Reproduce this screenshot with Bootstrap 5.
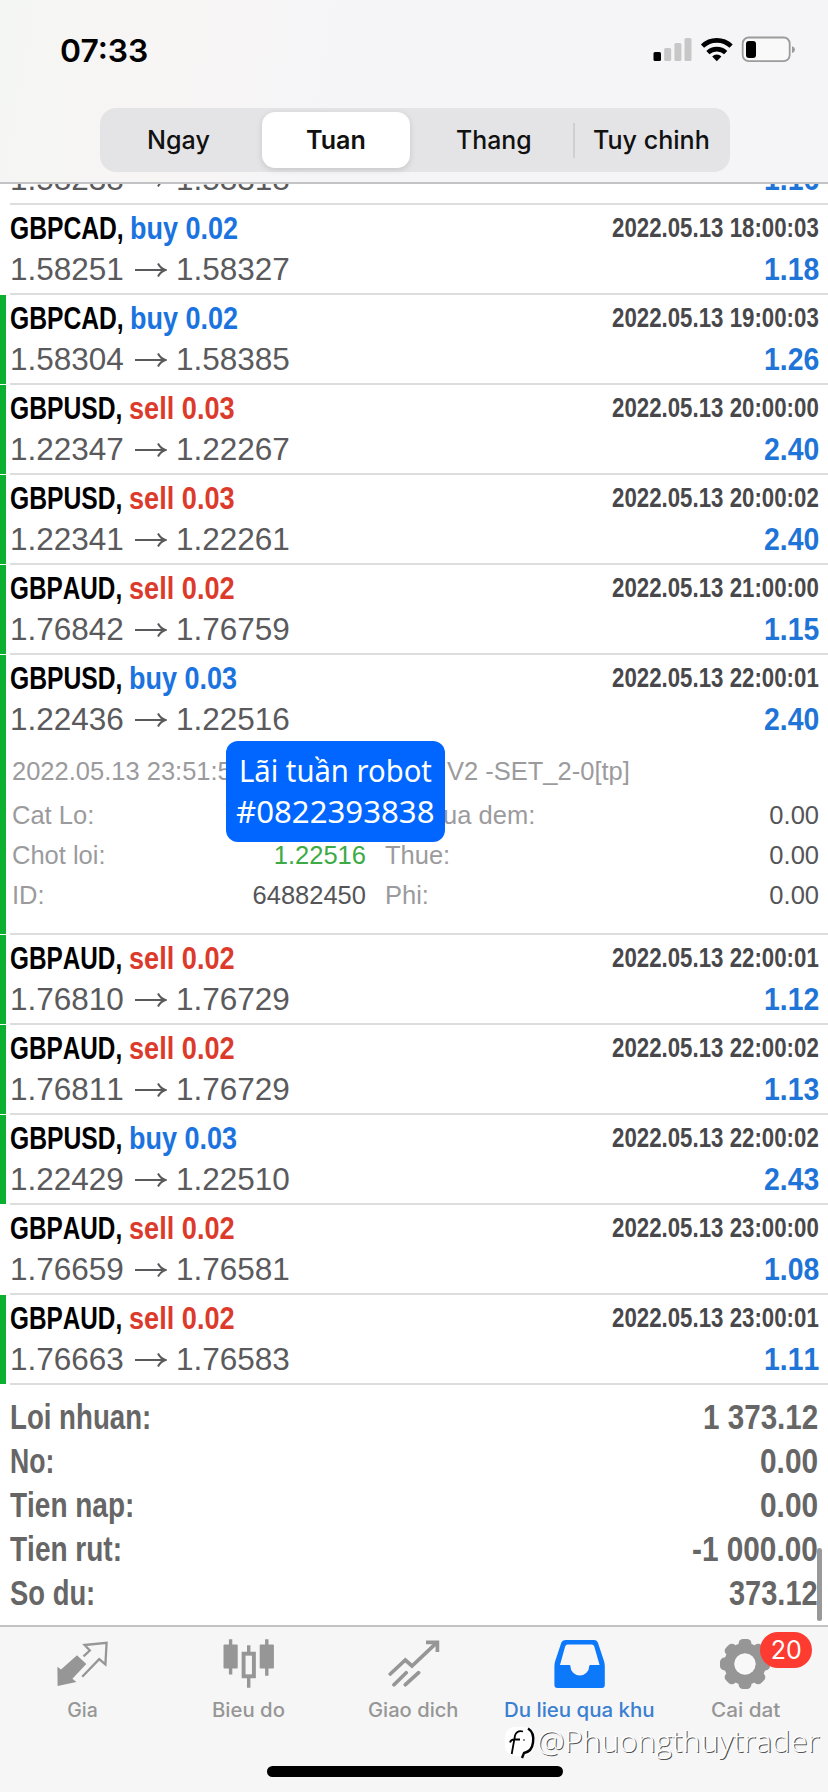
<!DOCTYPE html>
<html lang="vi">
<head>
<meta charset="utf-8">
<meta name="viewport" content="width=device-width, initial-scale=1">
<title>Du lieu qua khu</title>
<link href="https://cdn.jsdelivr.net/npm/bootstrap@5.3.0/dist/css/bootstrap.min.css" rel="stylesheet">
<style>
  body{width:828px;height:1792px;overflow:hidden;background:#fff;font-family:"Liberation Sans",Arial,sans-serif;color:#000}
  main,.sum{font-kerning:none}
  .ui{font-family:Inter,sans-serif}
  /* condensed text: the box takes the data-w width, the inner span is squeezed into it */
  .fit{display:inline-block;white-space:nowrap;flex:none}
  .fit>span{display:inline-block;transform-origin:0 50%}
  .topbar{height:184px;border-bottom:2px solid #c3c3c6;background:linear-gradient(100deg,#f4f6f4 0,#f8f5f5 22%,#f5f5f7 40%,#f5f5f7 100%)}
  .status{height:108px;padding:36px 32px 0 60px}
  .clock{font-size:31.5px;font-weight:600;line-height:29px}
  .seg{width:630px;height:64px;margin-left:100px;border-radius:16px;background:#e4e4e6}
  .seg-item{width:25%;font-size:25.5px;font-weight:500;line-height:64px;text-align:center;color:#111}
  .seg-item.on{width:148px;height:56px;line-height:56px;margin:4px 5px;background:#fff;border-radius:13px;box-shadow:0 2px 6px rgba(0,0,0,.13);font-weight:600}
  .seg-rule{width:2px;height:35px;background:#cfcfd2;margin-right:-2px}
  .clip{height:21px}
  .deal{height:90px}
  .stripe{width:6px;margin-bottom:1px}
  .stripe.hit{background:#0bb030}
  .deal-body{margin-left:4px;padding:3px 9px 0 0;border-bottom:2px solid #dddde0}
  .ln{height:41px;line-height:41px}
  .sym{font-size:32px;font-weight:700}
  .buy{color:#1a73de}.sell{color:#dc3b2c}
  .when{font-size:27px;font-weight:700;color:#48484b}
  .px{font-size:31.5px;color:#5a5a5d}
  .px svg{margin:1px 9px 0 11px}
  .gain{font-size:32px;font-weight:700;color:#1f74d8}
  .deal.open{height:280px}
  .info{font-size:25.5px;color:#9b9b9e;padding:9px 0 0 2px}
  .info-top{height:44px;line-height:44px;margin-bottom:2px}
  .info-row{height:40px;line-height:40px}
  .info-l{width:354px}.info-r{margin-left:19px}
  .val{color:#555558}.tp{color:#3cab45}
  .bubble{left:226px;top:741px;width:219px;height:101px;border-radius:12px;background:#06f;color:#fff;font-family:"Noto Sans",sans-serif;font-size:31.5px;line-height:41px;padding-top:8px;text-align:center}
  .sum{height:240px;padding:10px 10px 0 10px;color:#666;font-size:34.5px;font-weight:700}
  .sum>div{height:44px;line-height:44px}
  .knob{right:6px;top:1548px;width:5px;height:73px;border-radius:3px;background:#999}
  .tabs{height:167px;border-top:2px solid #c2c4c3;background:#f6f6f6}
  .tab{padding-top:11px;color:#969696;font-size:19.5px;font-weight:500}
  .tab .fit{line-height:24px;margin-top:8px}
  .tab svg{width:52px;height:52px;display:block}
  .tab.on{color:#3a7fd0}
  .count{left:41px;top:-6px;width:52px;height:36px;border-radius:18px;background:#fd3b30;color:#fff;font-size:25px;font-weight:400;text-align:center}
  .tab .count .fit{line-height:36px;margin-top:-1px}
  .home{left:267px;top:1766px;width:296px;height:11px;border-radius:6px;background:#000}
  .sign{left:504px;top:1725px;height:38px}
  .sign .fit{font-family:"Open Sans",sans-serif;font-weight:300;font-size:28.5px;line-height:33px;color:#fff;text-shadow:1px 1px 0 #555}
</style>
</head>
<body class="position-relative">
<header class="topbar ui">
  <div class="status d-flex justify-content-between align-items-start">
    <div class="clock fit" data-w="88"><span>07:33</span></div>
    <svg width="144" height="27" viewBox="651 36 144 27">
      <rect x="652.5" y="52" width="7.5" height="9" rx="1.5"/>
      <g fill="#c7c7c7"><rect x="663.2" y="48" width="7" height="13" rx="1.5"/><rect x="673.4" y="43" width="7" height="18" rx="1.5"/><rect x="683.5" y="38" width="7" height="23" rx="1.5"/></g>
      <g fill="none" stroke="#000" stroke-width="4.6"><path d="M701.5 46.2a20.5 20.5 0 0 1 28.6 0"/><path d="M706.9 52.6a13 13 0 0 1 17.8 0"/></g>
      <path d="M715.8 61.2l-4.6-4.8a6.6 6.6 0 0 1 9.2 0z"/>
      <rect x="741.7" y="37.5" width="47" height="23.6" rx="6" fill="#f9f9f9" stroke="#9b9b9b" stroke-width="1.8"/>
      <rect x="745" y="41" width="10" height="17" rx="3"/><path d="M791 46.2q3 1 3 3.4t-3 3.4z" fill="#9b9b9b"/>
    </svg>
  </div>
  <div class="seg d-flex align-items-center">
    <div class="seg-item"><span class="fit" data-w="63"><span>Ngay</span></span></div>
    <div class="seg-item on"><span class="fit" data-w="60"><span>Tuan</span></span></div>
    <div class="seg-item"><span class="fit" data-w="76"><span>Thang</span></span></div>
    <div class="seg-rule"></div>
    <div class="seg-item"><span class="fit" data-w="117"><span>Tuy chinh</span></span></div>
  </div>
</header>

<main id="list"></main>

<section class="sum" id="sum"></section>
<div class="knob position-absolute"></div>

<div class="bubble position-absolute">
  <div><span class="fit" data-w="193"><span>Lãi tuần robot</span></span></div>
  <div><span class="fit" data-w="199"><span>#0822393838</span></span></div>
</div>

<nav class="tabs ui d-flex">
  <div class="tab col d-flex flex-column align-items-center">
    <svg viewBox="0 0 52 52"><path fill="#969696" d="M.4 28.7l3.600 2.900 16-14.400 9.300 8.800-13.900 14.700 4 3.400L.6 48z"/><path fill="none" stroke="#969696" stroke-width="2.300" d="M26.500 18.300l6.300-5.800L27.600 7l22-2.200-1.200 21.600-6.200-5.300L25.200 38.700"/></svg>
    <span class="fit" data-w="31"><span>Gia</span></span>
  </div>
  <div class="tab col d-flex flex-column align-items-center">
    <svg viewBox="0 0 52 52" fill="#969696"><rect x="1.5" y="6.5" width="14.2" height="24" rx="1"/><rect x="37.7" y="6.5" width="14.2" height="24" rx="1"/><path fill="none" stroke="#969696" stroke-width="3.4" d="M8.6 1.3v35.2M44.8 1.3v36.4M26.7 7.3V15M26.7 39v10.8"/><rect x="21.6" y="15.7" width="10.3" height="22.6" fill="none" stroke="#969696" stroke-width="3.9"/></svg>
    <span class="fit" data-w="73"><span>Bieu do</span></span>
  </div>
  <div class="tab col d-flex flex-column align-items-center">
    <svg viewBox="0 0 52 52" fill="none" stroke="#969696" stroke-width="3.7"><path stroke-linecap="round" d="M2.3 36l15-14 6.7 6L48.5 4.8M6 46.700l12.200-12M17.400 46.700l13.200-12"/><path d="M38 4.300h11.400V14"/></svg>
    <span class="fit" data-w="91"><span>Giao dich</span></span>
  </div>
  <div class="tab on col d-flex flex-column align-items-center">
    <svg viewBox="0 0 52 52"><path fill="#0c78fa" fill-rule="evenodd" d="M12 2h28q3 0 4 3l6 18q.8 2.4.8 5v19q0 3-3 3H3.400q-3 0-3-3V28q0-2.600.8-5l6-18q1-3 4.800-3zM13.600 6.500q-1.800 0-2.400 1.800L6 27h9.400q1 0 1 1.200a9.400 9.400 0 0 0 18.800 0q0-1.200 1-1.200h9.400L40.200 8.300q-.6-1.800-2.400-1.800z"/></svg>
    <span class="fit" data-w="151"><span>Du lieu qua khu</span></span>
  </div>
  <div class="tab col d-flex flex-column align-items-center">
    <div class="position-relative">
      <svg viewBox="0 0 52 52" fill="#969696">
        <defs><rect id="tooth" x="19.600" y="1" width="12.800" height="13" rx="4.500"/></defs>
        <use href="#tooth"/><use href="#tooth" transform="rotate(45 26 26)"/><use href="#tooth" transform="rotate(90 26 26)"/><use href="#tooth" transform="rotate(135 26 26)"/><use href="#tooth" transform="rotate(180 26 26)"/><use href="#tooth" transform="rotate(225 26 26)"/><use href="#tooth" transform="rotate(270 26 26)"/><use href="#tooth" transform="rotate(315 26 26)"/>
        <circle cx="26" cy="26" r="15.700" fill="none" stroke="#969696" stroke-width="10.500"/><circle cx="26" cy="26" r="10.600" fill="#f8f8f8"/>
      </svg>
      <div class="count position-absolute"><span class="fit" data-w="31"><span>20</span></span></div>
    </div>
    <span class="fit" data-w="69"><span>Cai dat</span></span>
  </div>
</nav>
<div class="home position-absolute"></div>
<div class="sign position-absolute d-flex">
  <svg width="33" height="36" viewBox="0 0 33 36"><rect x="1" y="2" width="29" height="29" rx="10" fill="#fff"/><g fill="none" stroke="#000"><path stroke-width="1.800" d="M19 6.500q-6-1.500-8 4L7.700 29M6 17.500q1-3 4-3h6"/><path stroke-width="2.400" d="M24 3.500q6.500 4 5 14-1 9-9 10.500l-2 5"/></g><circle cx="20" cy="15" r=".8"/></svg>
  <span class="fit" data-w="283"><span>@Phuongthuytrader</span></span>
</div>

<script src="https://cdn.jsdelivr.net/npm/bootstrap@5.3.0/dist/js/bootstrap.bundle.min.js"></script>
<script>
  // symbol, side, lots, open price, close price, time, profit, take-profit hit
  const deals = [
    ['GBPCAD','buy','0.02','1.58251','1.58327','18:00:03','1.18',0],
    ['GBPCAD','buy','0.02','1.58304','1.58385','19:00:03','1.26',1],
    ['GBPUSD','sell','0.03','1.22347','1.22267','20:00:00','2.40',1],
    ['GBPUSD','sell','0.03','1.22341','1.22261','20:00:02','2.40',1],
    ['GBPAUD','sell','0.02','1.76842','1.76759','21:00:00','1.15',1],
    ['GBPUSD','buy','0.03','1.22436','1.22516','22:00:01','2.40',1],
    ['GBPAUD','sell','0.02','1.76810','1.76729','22:00:01','1.12',1],
    ['GBPAUD','sell','0.02','1.76811','1.76729','22:00:02','1.13',1],
    ['GBPUSD','buy','0.03','1.22429','1.22510','22:00:02','2.43',1],
    ['GBPAUD','sell','0.02','1.76659','1.76581','23:00:00','1.08',0],
    ['GBPAUD','sell','0.02','1.76663','1.76583','23:00:01','1.11',1]
  ];
  const symW = {GBPCAD:114, GBPUSD:112.5, GBPAUD:112.5};
  const fit = (t, w, c='') => `<span class="fit ${c}" data-w="${w}"><span>${t}</span></span>`;
  const prices = (a, b, p) => `<div class="ln d-flex justify-content-between"><div class="d-flex align-items-center px">
      ${fit(a,114)}<svg width="32" height="16" fill="none" stroke="#5a5a5d" stroke-width="2"><path d="M0 8h30M23 1.500q2.500 5 7.500 6.500-5 1.500-7.500 6.500"/></svg>${fit(b,114)}</div>${fit(p,55,'gain')}</div>`;
  const info = `<div class="info">
      <div class="info-top d-flex"><div style="width:435px">2022.05.13 23:51:5</div><div>V2 -SET_2-0[tp]</div></div>
      <div class="info-row d-flex"><div class="info-l">Cat Lo:</div><div class="info-r">Phi qua dem:</div><div class="ms-auto val">0.00</div></div>
      <div class="info-row d-flex"><div class="info-l d-flex justify-content-between"><span>Chot loi:</span><span class="tp">1.22516</span></div><div class="info-r">Thue:</div><div class="ms-auto val">0.00</div></div>
      <div class="info-row d-flex"><div class="info-l d-flex justify-content-between"><span>ID:</span><span class="val">64882450</span></div><div class="info-r">Phi:</div><div class="ms-auto val">0.00</div></div>
    </div>`;
  const row = (d, open) => `<div class="deal d-flex ${open?'open':''}"><div class="stripe ${d[7]?'hit':''}"></div><div class="deal-body flex-fill">
      <div class="ln d-flex justify-content-between"><div class="d-flex sym">${fit(d[0]+',',symW[d[0]],'me-1')}<span style="width:2px"></span>${fit(d[1]+' '+d[2],d[1]=='buy'?108:106,d[1])}</div>${fit('2022.05.13 '+d[5],207,'when')}</div>
      ${prices(d[3],d[4],d[6])}${open?info:''}</div></div>`;
  document.getElementById('list').innerHTML =
    `<div class="clip overflow-hidden d-flex flex-column justify-content-end">
       <div class="deal d-flex flex-shrink-0"><div class="stripe"></div><div class="deal-body flex-fill"><div class="ln"></div>${prices('1.58238','1.58318','1.16')}</div></div></div>` +
    deals.map((d, i) => row(d, i === 5)).join('');
  document.getElementById('sum').innerHTML = [
    ['Loi nhuan:',141,'1 373.12',115],['No:',44,'0.00',58],['Tien nap:',124,'0.00',58],['Tien rut:',112,'-1 000.00',126],['So du:',85,'373.12',89]
  ].map(s => `<div class="d-flex justify-content-between">${fit(s[0],s[1])}${fit(s[2],s[3])}</div>`).join('');
  document.querySelectorAll('.fit').forEach(el => {
    const inner = el.firstElementChild, w = +el.dataset.w, n = inner.offsetWidth;
    el.style.width = w + 'px';
    inner.style.transform = `scaleX(${w / n})`;
  });
</script>
</body>
</html>
